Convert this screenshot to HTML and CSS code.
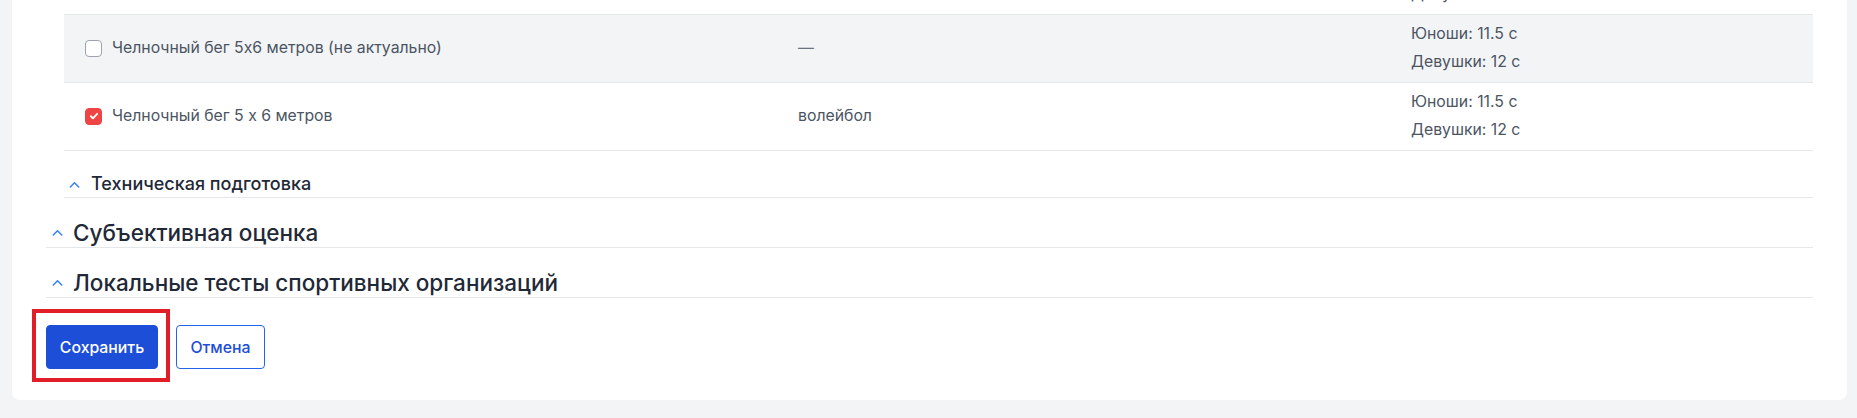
FILE: index.html
```html
<!DOCTYPE html>
<html lang="ru">
<head>
<meta charset="utf-8">
<title>Нормативы</title>
<link rel="stylesheet" href="styles.css">
</head>
<body>
<div class="page">
  <div class="card">
    <div class="group">
      <div class="table">
        <div class="row">
          <div class="cell name"><span class="check"></span><span>Челночный бег 3x10 метров</span></div>
          <div class="cell sport">—</div>
          <div class="cell norm"><div>Юноши: 7.5 с</div><div>Девушки: 12 с</div></div>
        </div>
        <div class="row row-hover">
          <div class="cell name"><span class="check"></span><span>Челночный бег 5x6 метров (не актуально)</span></div>
          <div class="cell sport dash">—</div>
          <div class="cell norm"><div>Юноши: 11.5 с</div><div>Девушки: 12 с</div></div>
        </div>
        <div class="row">
          <div class="cell name"><span class="check checked"><svg viewBox="0 0 12 12" width="10" height="10"><polyline points="2.2,6.3 4.8,8.8 9.8,3.4" fill="none" stroke="#fff" stroke-width="2.2" stroke-linecap="round" stroke-linejoin="round"/></svg></span><span>Челночный бег 5 x 6 метров</span></div>
          <div class="cell sport">волейбол</div>
          <div class="cell norm"><div>Юноши: 11.5 с</div><div>Девушки: 12 с</div></div>
        </div>
      </div>
      <div class="subhead">
        <svg class="chev" viewBox="0 0 12 8" width="11" height="7"><polyline points="1.2,6.8 6,2 10.8,6.8" fill="none" stroke="#3b82f6" stroke-width="1.8" stroke-linecap="round" stroke-linejoin="round"/></svg>
        <span>Техническая подготовка</span>
      </div>
    </div>
    <div class="section">
      <svg class="chev" viewBox="0 0 12 8" width="11" height="7"><polyline points="1.2,6.8 6,2 10.8,6.8" fill="none" stroke="#3b82f6" stroke-width="1.8" stroke-linecap="round" stroke-linejoin="round"/></svg>
      <span>Субъективная оценка</span>
    </div>
    <div class="section">
      <svg class="chev" viewBox="0 0 12 8" width="11" height="7"><polyline points="1.2,6.8 6,2 10.8,6.8" fill="none" stroke="#3b82f6" stroke-width="1.8" stroke-linecap="round" stroke-linejoin="round"/></svg>
      <span>Локальные тесты спортивных организаций</span>
    </div>
    <div class="actions">
      <span class="highlight"><button class="btn btn-primary" type="button">Сохранить</button></span>
      <button class="btn btn-outline" type="button">Отмена</button>
    </div>
  </div>
</div>
</body>
</html>
```
FILE: styles.css
```css
* { box-sizing: border-box; }
html, body { margin: 0; padding: 0; }
body {
  background: #f3f4f6;
  font-family: Inter, "Noto Sans", "Liberation Sans", sans-serif;
  color: #374151;
  overflow: hidden;
}
.page {
  padding: 0 10px 17px 12px;
}
.card {
  background: #ffffff;
  border-radius: 0 0 8px 8px;
  margin-top: -53px;
  padding: 0 34px 31px 34px;
}
.group {
  padding-left: 18px;
}
.table {
  display: flex;
  flex-direction: column;
}
.row {
  display: grid;
  grid-template-columns: 734px 613px 1fr;
  align-items: center;
  padding: 5px 0 6px;
  border-bottom: 1px solid #e5e7eb;
  font-size: 15.8px;
  line-height: 28px;
  color: #4b5563;
}
.row-hover {
  background: #f3f4f6;
}
.cell.name {
  display: flex;
  align-items: center;
  padding-left: 21px;
  gap: 10px;
}
.check {
  width: 17px;
  height: 17px;
  border: 1px solid #9ca3af;
  border-radius: 4px;
  background: #fff;
  flex: none;
  display: flex;
  align-items: center;
  justify-content: center;
}
.check.checked {
  background: #ef4444;
  border-color: #ef4444;
}
.dash { color: #6b7280; }
.subhead {
  display: flex;
  align-items: center;
  gap: 11px;
  padding: 22px 0 2px 5px;
  border-bottom: 1px solid #e5e7eb;
  font-size: 18px;
  line-height: 22px;
  font-weight: 500;
  color: #1f2937;
}
.section {
  display: flex;
  align-items: center;
  gap: 10px;
  padding: 20px 0 0 6px;
  border-bottom: 1px solid #e5e7eb;
  font-size: 22.5px;
  line-height: 29px;
  font-weight: 500;
  color: #1f2937;
}
.chev { flex: none; }
.actions {
  display: flex;
  align-items: center;
  gap: 18px;
  margin-top: 27px;
}
.highlight {
  position: relative;
  display: inline-flex;
}
.highlight::after {
  content: "";
  position: absolute;
  top: -16px;
  left: -14px;
  right: -12px;
  bottom: -13px;
  border: 4px solid #e11d28;
  pointer-events: none;
}
.btn {
  height: 44px;
  padding: 0;
  border-radius: 4px;
  font-family: Inter, "Noto Sans", "Liberation Sans", sans-serif;
  font-size: 15.8px;
  font-weight: 500;
  cursor: pointer;
}
.btn-primary {
  width: 112px;
  background: #1d4ed8;
  border: 1px solid #1d4ed8;
  color: #ffffff;
}
.btn-outline {
  width: 89px;
  background: #ffffff;
  border: 1px solid #2563eb;
  color: #1d4ed8;
}
```
